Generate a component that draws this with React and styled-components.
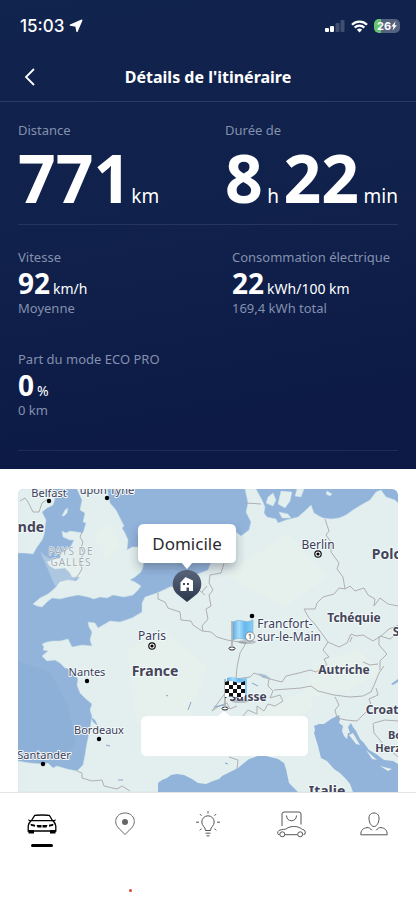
import React from 'react';
import styled, { createGlobalStyle } from 'styled-components';

const App = () => {
  return (
    <>
      <GlobalStyle />
      <Screen>
        <TripPanel>
          <StatusBar>
            <Clock>
              <time>15:03</time>
              <svg width="14" height="14" viewBox="0 0 14 14" aria-hidden="true">
                <path d="M12.800 1.200 8 12.400 7 7 1.300 6.100Z" fill="#fff" stroke="#fff" strokeWidth="1.400" strokeLinejoin="round" />
              </svg>
            </Clock>
            <Signals>
              <SignalIcon />
              <WifiIcon />
              <Battery>
                26
                <svg width="6" height="10" viewBox="0 0 6 10" aria-hidden="true">
                  <path d="M4.600.300.300 5.600h2.200L1.600 9.600 5.900 4.300H3.600Z" fill="#fff" />
                </svg>
              </Battery>
            </Signals>
          </StatusBar>
          <TitleBar>
            <BackButton aria-label="Retour">
              <svg width="12" height="18" viewBox="0 0 12 18" fill="none" stroke="#fff" strokeWidth="1.800">
                <path d="m10 1-8 8 8 8" />
              </svg>
            </BackButton>
            <Title>Détails de l'itinéraire</Title>
          </TitleBar>
          <Stats>
            <Totals>
              <div>
                <Label>Distance</Label>
                <BigValue>
                  <strong>771</strong>
                  <span>km</span>
                </BigValue>
              </div>
              <div>
                <Label>Durée de</Label>
                <BigValue>
                  <strong>8</strong>
                  <span>h</span>
                  <strong>22</strong>
                  <span>min</span>
                </BigValue>
              </div>
            </Totals>
            <Details>
              <Stat label="Vitesse" value="92" unit="km/h" note="Moyenne" />
              <Stat label="Consommation électrique" value="22" unit="kWh/100 km" note="169,4 kWh total" />
              <Stat label="Part du mode ECO PRO" value="0" unit="%" note="0 km" />
            </Details>
          </Stats>
        </TripPanel>
        <MapSection>
          <TripMap />
        </MapSection>
        <TabBar>
          {tabs.map(({ name, Icon, active }) => (
            <Tab key={name} aria-label={name} $active={active}>
              <Icon />
            </Tab>
          ))}
          <Dot />
        </TabBar>
      </Screen>
    </>
  );
};

const Stat = ({ label, value, unit, note }) => (
  <div>
    <Label>{label}</Label>
    <Value>
      <strong>{value}</strong>
      <span>{unit}</span>
    </Value>
    <Label>{note}</Label>
  </div>
);

const SignalIcon = () => (
  <svg width="20" height="12" viewBox="0 0 20 12" fill="#fff" aria-hidden="true">
    <rect x="0" y="8" width="4" height="4" rx="1" />
    <rect x="5" y="6" width="4" height="6" rx="1" />
    <rect x="10.500" y="3" width="4" height="9" rx="1" opacity=".2" />
    <rect x="15.500" y="0" width="4" height="12" rx="1" opacity=".2" />
  </svg>
);

const WifiIcon = () => (
  <svg width="17" height="13" viewBox="0 0 17 13" fill="none" stroke="#fff" strokeWidth="2.300" aria-hidden="true">
    <path d="M1 4.700a10.600 10.600 0 0 1 15 0M3.700 7.600a6.800 6.800 0 0 1 9.600 0" />
    <path d="m8.500 12.500-2.600-2.700a3.700 3.700 0 0 1 5.200 0Z" fill="#fff" stroke="none" />
  </svg>
);

const CarIcon = () => (
  <svg width="30" height="20" viewBox="0 0 30 20" fill="none" stroke="#000" strokeWidth="1.300" aria-hidden="true">
    <path d="M4.500 6.500 7.500 1.600C8.500.8 21.500.8 22.500 1.600l3 4.900M2 6.600h26M4.500 6.500C2 8.500 1.200 9.500 1.200 12v5h27.600v-5c0-2.500-.8-3.500-3.300-5.500" />
    <path d="M1 5.300 4 6.500 1.800 7ZM29 5.300 26 6.500l2.200.5ZM1 16h6v3.500H1.600ZM23 16h6l-.6 3.500H23ZM3.500 9.800l4.500 1v1.900l-4-1ZM26.500 9.800l-4.500 1v1.900l4-1ZM9.500 11h5v2.500h-4ZM15.500 11h5l-1 2.500h-4Z" fill="#000" stroke="none" />
  </svg>
);

const PinIcon = () => (
  <svg width="20" height="24" viewBox="0 0 20 24" fill="none" stroke="#666" aria-hidden="true">
    <path d="M10 22.500 3.500 16C-2.500 9.500 1.800 1 10 1s12.500 8.500 6.500 15Z" />
    <circle cx="10" cy="10" r="3" fill="#666" stroke="none" />
  </svg>
);

const BulbIcon = () => (
  <svg width="24" height="26" viewBox="0 0 24 26" fill="none" stroke="#555" aria-hidden="true">
    <path d="M9.500 19.500c0-3.500-3.700-4.500-3.700-8.500a6.200 6.200 0 0 1 12.400 0c0 4-3.700 5-3.700 8.500ZM9.500 22.200h5M10.500 24.800h3M12 .2v2.300M0 11.200h3M21 11.200h3M3.800 3l1.800 1.800M20.200 3l-1.800 1.800M3.800 19.400l1.800-1.800M20.200 19.400l-1.800-1.800" />
  </svg>
);

const ShopIcon = () => (
  <svg width="29" height="27" viewBox="0 0 29 27" fill="none" stroke="#555" aria-hidden="true">
    <path d="M5 15V3q0-2 2-2h15q2 0 2 2v10.500M9.500 4.500c0 7 10 7 10 0" />
    <path d="M2.500 23.500H1.300q-1-.5-.3-3c.6-1.800 5-2 7.500-2.300 2-1.400 4.500-2.700 8-2.700 5 0 7 1.600 9 3 2.500.5 3 1.500 2.600 4.500l-1.600.5M8 23.700h12.500" />
    <circle cx="5.300" cy="23.300" r="2.500" />
    <circle cx="23.200" cy="23.300" r="2.500" />
  </svg>
);

const ProfileIcon = () => (
  <svg width="28" height="24" viewBox="0 0 28 24" fill="none" stroke="#555" aria-hidden="true">
    <path d="M14 1c4 0 5.300 3 5 6-.4 4.500-2.500 7.500-5 7.500S9.400 11.500 9 7c-.3-3 1-6 5-6Z" />
    <path d="M11.800 18.300C10.500 16.500 8.800 15.300 7 15.600 3 16.300.8 18 .8 22.800h26.400c0-4.800-2.200-6.500-6.200-7.200-1.800-.3-3.500.9-4.800 2.700" />
  </svg>
);

const tabs = [
  { name: 'Véhicule', Icon: CarIcon, active: true },
  { name: 'Carte', Icon: PinIcon },
  { name: 'Conseils', Icon: BulbIcon },
  { name: 'Boutique', Icon: ShopIcon },
  { name: 'Profil', Icon: ProfileIcon },
];

const cities = [
  { name: 'Belfast', x: 49, y: 497, dot: [49, 501] },
  { name: 'upon Tyne', x: 107, y: 494, dot: [107, 498] },
  { name: 'Berlin', x: 318, y: 549, dot: [318, 554], capital: true },
  { name: 'Paris', x: 152, y: 640, dot: [152, 646], capital: true },
  { name: 'Nantes', x: 87, y: 676, dot: [87, 681] },
  { name: 'Bordeaux', x: 99, y: 734, dot: [99, 739] },
  { name: 'Santander', x: 44, y: 759, dot: [43, 764] },
];

const countries = [
  { name: 'nde', x: 31, y: 532, size: 14 },
  { name: 'Polo', x: 387, y: 559, size: 14 },
  { name: 'Tchéquie', x: 354, y: 622, size: 12 },
  { name: 'France', x: 155, y: 676, size: 14 },
  { name: 'Autriche', x: 344, y: 674, size: 12 },
  { name: 'Suisse', x: 248, y: 701, size: 12 },
  { name: 'Croat', x: 382, y: 714, size: 12 },
  { name: 'Bo', x: 395, y: 739, size: 11 },
  { name: 'Herz', x: 388, y: 752, size: 11 },
  { name: 'S', x: 396, y: 636, size: 12 },
  { name: 'Italie', x: 327, y: 796, size: 14 },
];

const TripMap = () => (
  <MapCanvas viewBox="18 489 380 303" preserveAspectRatio="xMidYMin slice" role="img" aria-label="Carte du trajet">
    <defs>
      <linearGradient id="pin" x1="0" y1="0" x2="0" y2="1">
        <stop offset="0" stopColor="#5c687d" />
        <stop offset="1" stopColor="#2a364c" />
      </linearGradient>
      <linearGradient id="flag">
        <stop offset="0" stopColor="#62b0e6" />
        <stop offset=".3" stopColor="#a9dcfa" />
        <stop offset=".6" stopColor="#63b8ef" />
        <stop offset="1" stopColor="#8fcdf3" />
      </linearGradient>
      <pattern id="checks" width="8" height="8" patternUnits="userSpaceOnUse" x="225" y="681">
        <rect width="8" height="8" fill="#fff" />
        <path d="M0 0h4v4H0ZM4 4h4v4H4Z" fill="#111" />
      </pattern>
      <filter id="shadow" x="-20%" y="-20%" width="140%" height="170%">
        <feDropShadow dx="0" dy="5" stdDeviation="5" floodColor="#334" floodOpacity=".35" />
      </filter>
    </defs>
    <rect x="18" y="489" width="380" height="303" fill="#92b4db" />
    <path d="M18 661 50 672 68 705 76 745 60 760 18 752Z" fill="#87aad5" opacity=".4" />
    <Land>
      <path d="M18 489H50L55 499 53 505 47 508 42 512 46 520 45 527 44 535 42 540 37 547 33 554 25 553 18 553Z" />
      <path d="M77 489 82 500 80 510 85 513 83 522 86 523 83 533 77 532 70 531 66 533 62 531 63 537 70 540 74 540 71 546 67 550 61 553 60 558 53 560 47 562 50 566 55 569 65 568 70 573 72 577 80 577 76 581 68 580 60 582 55 588 48 594 40 598 33 604 37 606 42 607 47 602 52 598 60 599 68 597 78 595 88 597 94 599 100 597 107 598 113 595 124 597 133 595 138 590 141 586 135 582 130 580 135 577 141 572 143 567 145 552 139 547 132 547 127 550 128 540 125 533 122 528 124 526 120 518 116 510 110 503 107 489Z" />
      <path d="M62 516 65 510 68 508 67 513 64 516Z" />
      <path d="M245 489 248 503 246 512 251 522 249 530 241 536 236 532 225 537 215 552 208 570 190 577 170 587 157 593 145 597 142 603 142 612 132 618 120 622 110 621 98 628 95 623 88 622 89 627 92 632 90 640 92 646 82 645 72 647 70 643 68 639 60 641 53 641 47 642 42 644 44 647 43 650 48 651 42 656 47 661 55 660 60 663 65 668 70 669 75 675 78 679 77 685 80 693 86 699 92 704 90 710 92 716 90 729 87 743 85 755 83 765 77 771 67 769 57 766 53 768 48 763 43 764 30 763 18 761V792H400V505L395 500 386 497 381 490 376 492 370 500 361 505 353 510 346 515 339 518 331 519 323 518 319 516 314 513 311 505 306 510 298 517 286 520 278 523 276 519 267 517 264 513 265 507 262 500 256 489Z" />
      <path d="M268 497 273 493 276 500 273 506 266 503ZM281 491 292 492 290 501 285 508 278 504ZM297 489H304L301 497 295 496ZM279 512 288 514 291 518 282 518ZM327 491 332 494 330 496 326 494Z" />
    </Land>
    <Water>
      <path d="M158 792V783L162 780 167 778 171 775 177 774 184 775 192 779 198 783 206 784 213 781 219 779 222 776 226 774 238 768 249 759 261 755 270 757 278 759 284 763 286 769 289 783 298 792Z" />
      <path d="M314 733 315 730 314 726 319 724 324 724 331 719 339 715 340 719 339 723 343 726 342 731 344 736 347 739 348 733 350 733 348 727 351 723 353 727 356 731 360 739 364 743 369 750 376 754 384 760 393 761 398 764V792H353L350 784 346 779 340 773 334 769 327 761 321 758 318 746Z" />
      <path d="M91 717 95 720 98 726 93 722Z" />
      <path d="M258 673 266 675 271 679 263 678Z" opacity=".7" />
      <path d="M391 684 398 679V682L393 685Z" />
    </Water>
    <Terrain>
      <path d="M349 735 353 733 360 745 356 744ZM366 750 377 760 372 759ZM380 766 392 769 388 771Z" />
    </Terrain>
    <Terrain $faint>
      <path d="M40 551q11 14 35 7l10 18-30 10ZM93 535l20-11 7 22-14 14ZM127 650l38-20 42 38-19 53-52 3ZM225 575l63-42 40 43-42 31ZM314 663l43-13 27 21-35 19-48 10ZM239 718l70-29 5 19-53 29Z" />
    </Terrain>
    <Borders>
      <path d="M20 501 25 498 28 502 33 512 39 512 42 503 48 499M82 532 80 537 83 542 81 548 84 553 80 560 82 569 79 574 76 578M246 503 261 504M325 519 329 531 326 535 331 542 331 552 339 563 337 569 343 577 345 589" />
      <path d="M345 589 339 588 334 594 323 597 317 603 315 609 304 609 309 618 314 623M345 589 350 586 355 591 364 588 368 595 375 599 374 606 380 598 388 604 398 606M314 623 320 631 328 642 339 647 347 643 351 634 356 636 363 635 373 641 381 636 389 629 399 625" />
      <path d="M158 593 158 599 165 602 168 608 180 612 181 620 191 621 193 625 202 631 211 632 217 637 227 640 233 641M171 586 179 589 188 587 195 593 199 590 205 595M224 563 221 573 210 575 209 583 213 590 209 595 211 606 206 609 208 619 202 626 203 631M202 592 207 586M233 641 246 643 240 653 237 667 236 679" />
      <path d="M236 679 231 686 220 700 212 711 219 706 227 703 230 709 237 706M236 679 250 677 254 673 262 676 270 679M269 678 268 686 273 691 270 698 280 695 283 701 275 706 268 704 264 711 257 706 257 714 248 710 243 716M229 757 238 760 237 769" />
      <path d="M270 679 282 682 286 676 299 673 310 670 316 672 326 665M274 690 287 689 301 688 311 686 318 691 334 695 350 697 363 696 371 692 375 683 379 673 384 666M327 665 324 659 329 657 323 650 328 642M335 697 339 705 335 710 337 718 346 720 357 721 367 711 372 707 369 699 378 695 376 688M374 723 385 720 398 721M373 723 374 733 384 745 398 757M350 642 352 637M379 636 379 645 387 654 380 661 380 670M363 662 370 665 378 664M380 636 390 639 398 633" />
      <path d="M77 771 82 773 82 778 92 781 102 780 104 786 117 789 122 786 130 791" />
    </Borders>
    <Lakes>
      <path d="M191 702 188 710M252 683 258 686M166 695 168 696M106 745 110 746M118 780H123M214 707 224 705M225 763 228 764" />
    </Lakes>
    <Region x="71" y="555">PAYS DE</Region>
    <Region x="71" y="566">GALLES</Region>
    {cities.map(({ name, x, y, dot, capital }) => (
      <g key={name}>
        {capital && <circle cx={dot[0]} cy={dot[1]} r="3.200" fill="#fff" stroke="#111" strokeWidth="1.200" />}
        <circle cx={dot[0]} cy={dot[1]} r={capital ? 1.6 : 2.2} fill="#000" />
        <City x={x} y={y} $size={capital ? 12 : 11}>{name}</City>
      </g>
    ))}
    <circle cx="252" cy="616" r="2.300" />
    <City x="285" y="628" $size={12}>Francfort-</City>
    <City x="289" y="641" $size={12}>sur-le-Main</City>
    {countries.map(({ name, x, y, size }) => (
      <Country key={name} x={x} y={y} $size={size}>{name}</Country>
    ))}
    {/* waypoint flag */}
    <ellipse cx="247" cy="642" rx="9" ry="2" fill="#556" opacity=".3" />
    <ellipse cx="232" cy="648.500" rx="3" ry="1.500" fill="#fff" stroke="#222" />
    <path d="M232 621v27" stroke="#aaa" strokeWidth="1.500" />
    <path d="M233 622q5-3 10-1t10-1v18q-5 3-10 1t-10 1Z" fill="url(#flag)" stroke="#6fa4c9" strokeWidth=".5" />
    <circle cx="250" cy="636.500" r="4.500" fill="#fff" stroke="#777" strokeWidth=".8" />
    <FlagNumber x="250" y="639">1</FlagNumber>
    {/* arrival flag */}
    <ellipse cx="240" cy="701" rx="9" ry="2" fill="#556" opacity=".3" />
    <ellipse cx="225" cy="708.500" rx="3" ry="1.500" fill="#fff" stroke="#222" />
    <path d="M225 679v29" stroke="#aaa" strokeWidth="1.500" />
    <path d="M227 678q5-2 10 0t10-1v18l-20 2Z" fill="url(#flag)" />
    <path d="M225 682q5-2 10 0t10-1v15q-5 3-10 1t-10 1Z" fill="url(#checks)" />
    {/* destination */}
    <path d="M187 602 177 594C168 585 174 570 187 570s19 15 10 24Z" fill="url(#pin)" />
    <path d="M180.500 591v-8.500l5-5.500 7.500 3.500V591h-4v-3.500h-2.500V591Z" fill="#fff" />
    <path d="M183 583h2v2h-2ZM187 583h2v2h-2Z" fill="#3d495e" />
    <path d="M144 524h86q6 0 6 6v27q0 6-6 6h-38l-5 6-5-6h-38q-6 0-6-6v-27q0-6 6-6Z" fill="#fff" filter="url(#shadow)" />
    <Destination x="187" y="550">Domicile</Destination>
    <path d="M148 716h70l6-5 6 5h72q6 0 6 6v28q0 6-6 6H147q-6 0-6-6v-28q0-6 7-6Z" fill="#fff" />
  </MapCanvas>
);

const GlobalStyle = createGlobalStyle`
  * {
    box-sizing: border-box;
  }

  body {
    margin: 0;
    font-family: 'Noto Sans', sans-serif;
    background: #fff;
  }

  p, h1 {
    margin: 0;
  }
`;

const Screen = styled.main`
  min-height: 100vh;
  display: flex;
  flex-direction: column;
`;

const TripPanel = styled.section`
  color: #fff;
  background: linear-gradient(170deg, #11244d 0%, #10214c 45%, #0b1944 100%);
`;

const StatusBar = styled.div`
  display: flex;
  justify-content: space-between;
  align-items: center;
  height: 52px;
  padding: 0 16px 0 20px;
`;

const Clock = styled.div`
  display: flex;
  align-items: center;
  gap: 5px;
  font: 500 17px/20px Inter, sans-serif;
`;

const Signals = styled.div`
  display: flex;
  align-items: center;
  gap: 6px;
`;

const Battery = styled.div`
  display: flex;
  align-items: center;
  justify-content: center;
  width: 26px;
  height: 14px;
  border-radius: 5px;
  background: linear-gradient(90deg, #6ac46f 26%, #55627f 26%);
  font: 700 11px/14px Inter, sans-serif;
`;

const TitleBar = styled.header`
  display: grid;
  grid-template-columns: 44px 1fr 44px;
  align-items: center;
  height: 50px;
  padding: 0 8px;
  border-bottom: 1px solid #2b3b62;
`;

const BackButton = styled.button`
  display: flex;
  justify-content: center;
  padding: 12px;
  border: 0;
  background: none;
`;

const Title = styled.h1`
  font-size: 16px;
  font-weight: 700;
  line-height: 20px;
  text-align: center;
`;

const Stats = styled.div`
  padding: 16px 18px 18px;
`;

const Totals = styled.div`
  display: grid;
  grid-template-columns: 1fr 173px;
  padding-bottom: 16px;
  border-bottom: 1px solid #25355c;
`;

const Label = styled.p`
  color: #8490ad;
  font-size: 13px;
  line-height: 24px;
  white-space: nowrap;
`;

const BigValue = styled.p`
  display: flex;
  align-items: baseline;
  height: 66px;
  font-size: 19px;
  line-height: 70px;

  strong {
    font-size: 66px;
    font-weight: 700;
  }

  div:last-child > & {
    justify-content: space-between;
  }
`;

const Details = styled.div`
  display: grid;
  grid-template-columns: 1fr 166px;
  row-gap: 27px;
  padding: 20px 0 28px;
  border-bottom: 1px solid #1d2c55;
`;

const Value = styled.p`
  display: flex;
  align-items: baseline;
  gap: 3px;
  height: 27px;
  font-size: 14px;
  line-height: 28px;

  strong {
    font-size: 28px;
    font-weight: 700;
  }
`;

const MapSection = styled.section`
  flex: 1;
  display: flex;
  min-height: 320px;
  padding: 20px 18px 0;
`;

const MapCanvas = styled.svg`
  flex: 1;
  min-width: 0;
  height: auto;
  border-radius: 6px 6px 0 0;
`;

const Land = styled.g`
  fill: #e2efee;
  stroke: #c9dfe6;
  stroke-width: 0.5;
`;

const Water = styled.g`
  fill: #92b4db;
`;

const Terrain = styled.g`
  fill: #eef4f0;
  opacity: ${props => (props.$faint ? 0.3 : 0.9)};
`;

const Borders = styled.g`
  fill: none;
  stroke: #b0afb1;
  stroke-linejoin: round;
`;

const Lakes = styled.g`
  fill: none;
  stroke: #86a4cc;
`;

const MapText = styled.text`
  font-family: 'Noto Sans', sans-serif;
  text-anchor: middle;
  paint-order: stroke;
  stroke: #f3f8f8;
  stroke-width: 2px;
  stroke-linejoin: round;
`;

const City = styled(MapText)`
  font-size: ${props => props.$size}px;
  fill: #3b3f5c;
`;

const Country = styled(MapText)`
  font-size: ${props => props.$size}px;
  font-weight: 700;
  fill: #44455a;
`;

const Region = styled(MapText)`
  font-size: 10px;
  letter-spacing: 1px;
  fill: #a3abb5;
  stroke-width: 1px;
`;

const FlagNumber = styled(MapText)`
  font-size: 7px;
  fill: #222;
`;

const Destination = styled(MapText)`
  font-size: 17px;
  fill: #2b2b2d;
  stroke: none;
`;

const TabBar = styled.nav`
  position: relative;
  display: flex;
  height: 108px;
  border-top: 1px solid #e3e4e6;
  background: #fff;
`;

const Tab = styled.button`
  flex: 1;
  display: flex;
  flex-direction: column;
  align-items: center;
  justify-content: center;
  position: relative;
  height: 62px;
  padding: 0;
  border: 0;
  background: none;

  &::after {
    content: '';
    display: ${props => (props.$active ? 'block' : 'none')};
    position: absolute;
    bottom: 8px;
    width: 22px;
    height: 3px;
    border-radius: 2px;
    background: #000;
  }
`;

const Dot = styled.span`
  position: absolute;
  left: 31%;
  bottom: 8px;
  width: 3px;
  height: 3px;
  border-radius: 50%;
  background: #dc4437;
`;

export default App;
